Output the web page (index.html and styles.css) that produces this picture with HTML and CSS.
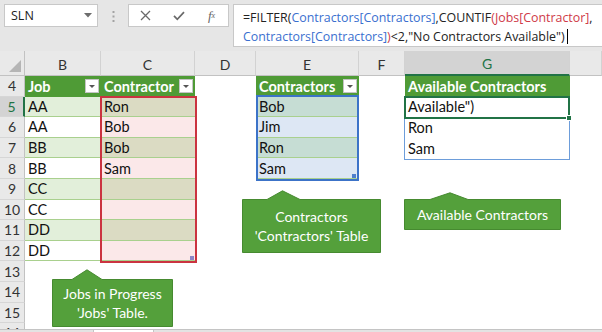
FILE: index.html
```html
<!DOCTYPE html>
<html>
<head>
<meta charset="utf-8">
<link rel="stylesheet" href="styles.css">
</head>
<body>
<div class="app">
  <div class="toolbar">
    <div class="namebox">
      <span>SLN</span>
      <svg width="8" height="5" viewBox="0 0 8 5"><path d="M0 0H8L4 4.5Z" fill="#6d6d6d"/></svg>
    </div>
    <div class="grip">
      <svg width="3" height="12" viewBox="0 0 3 12"><rect x="0.5" y="0" width="2" height="2" fill="#a3a3a3"/><rect x="0.5" y="4.5" width="2" height="2" fill="#a3a3a3"/><rect x="0.5" y="9" width="2" height="2" fill="#a3a3a3"/></svg>
    </div>
    <div class="fnbox">
      <span class="fnbtn"><svg width="11" height="11" viewBox="0 0 11 11"><path d="M1 1L10 10M10 1L1 10" stroke="#6a6a6a" stroke-width="1.3" fill="none"/></svg></span>
      <span class="fnbtn"><svg width="12" height="10" viewBox="0 0 12 10"><path d="M1 4.8L4.3 8.3L11 1.2" stroke="#6a6a6a" stroke-width="1.7" fill="none"/></svg></span>
      <span class="fnbtn fx">f<sub>x</sub></span>
    </div>
    <div class="formula">
      <div class="fline">=FILTER(<span class="fb">Contractors[Contractors]</span>,COUNTIF<span class="fr">(Jobs[Contractor]</span>,</div>
      <div class="fline"><span class="fb">Contractors[Contractors]</span><span class="fr">)</span>&lt;2,"No Contractors Available")<span class="caret"></span></div>
    </div>
  </div>

  <div class="sheet">
    <div class="grid">
      <div class="corner"><svg width="12" height="12" viewBox="0 0 12 12"><path d="M12 0V12H0Z" fill="#b5b5b5"/></svg></div>
      <div class="ch">B</div><div class="ch">C</div><div class="ch">D</div><div class="ch">E</div><div class="ch">F</div><div class="ch sel">G</div><div class="ch"></div>

      <div class="rh">4</div>
      <div class="cell th">Job<span class="fbtn"></span></div>
      <div class="cell th">Contractor<span class="fbtn"></span></div>
      <div></div>
      <div class="cell th">Contractors<span class="fbtn"></span></div>
      <div></div>
      <div class="cell th">Available Contractors</div>
      <div></div>

      <div class="rh sel">5</div>
      <div class="cell tb band">AA</div>
      <div class="cell tb r-odd">Ron</div>
      <div></div>
      <div class="cell tb b-odd">Bob</div>
      <div></div>
      <div class="cell">Available")</div>
      <div></div>

      <div class="rh">6</div>
      <div class="cell tb">AA</div>
      <div class="cell tb r-even">Bob</div>
      <div></div>
      <div class="cell tb b-even">Jim</div>
      <div></div>
      <div class="cell">Ron</div>
      <div></div>

      <div class="rh">7</div>
      <div class="cell tb band">BB</div>
      <div class="cell tb r-odd">Bob</div>
      <div></div>
      <div class="cell tb b-odd">Ron</div>
      <div></div>
      <div class="cell">Sam</div>
      <div></div>

      <div class="rh">8</div>
      <div class="cell tb">BB</div>
      <div class="cell tb r-even">Sam</div>
      <div></div>
      <div class="cell tb b-even">Sam</div>
      <div></div>
      <div class="cell"></div>
      <div></div>

      <div class="rh">9</div>
      <div class="cell tb band">CC</div>
      <div class="cell tb r-odd"></div>
      <div class="rest5"></div>

      <div class="rh">10</div>
      <div class="cell tb">CC</div>
      <div class="cell tb r-even"></div>
      <div class="rest5"></div>

      <div class="rh">11</div>
      <div class="cell tb band">DD</div>
      <div class="cell tb r-odd"></div>
      <div class="rest5"></div>

      <div class="rh">12</div>
      <div class="cell tb">DD</div>
      <div class="cell tb r-even"></div>
      <div class="rest5"></div>

      <div class="rh">13</div><div class="rest7"></div>
      <div class="rh">14</div><div class="rest7"></div>
      <div class="rh">15</div><div class="rest7"></div>
      <div class="rh">16</div><div class="rest7"></div>
    </div>

    <div class="ref ref-red"><span class="handle h-red"></span></div>
    <div class="ref ref-blue"><span class="handle h-blue"></span></div>
    <div class="ref ref-spill"></div>
    <div class="ref ref-active"><span class="fill-handle"></span></div>

    <div class="callout co-jobs">
      <svg class="co-shape" width="121" height="58" viewBox="0 0 121 58"><path d="M0.5 10.5H20L35 0.8L50 10.5H120.5V57.5H0.5Z" fill="#54a03b" stroke="#468a30"/></svg>
      <div class="co-text">Jobs in Progress<br>'Jobs' Table.</div>
    </div>
    <div class="callout co-con">
      <svg class="co-shape" width="139" height="63" viewBox="0 0 139 63"><path d="M0.5 9.5H25L40.5 0.8L58 9.5H138.5V62.5H0.5Z" fill="#54a03b" stroke="#468a30"/></svg>
      <div class="co-text">Contractors<br>'Contractors' Table</div>
    </div>
    <div class="callout co-av">
      <svg class="co-shape" width="157" height="38" viewBox="0 0 157 38"><path d="M0.5 7.5H26L46 0.8L64 7.5H156.5V37.5H0.5Z" fill="#54a03b" stroke="#468a30"/></svg>
      <div class="co-text">Available Contractors</div>
    </div>
  </div>

  <div class="tabs">
    <div class="tab t1"></div><div class="tab t2"></div><div class="tab t3"></div>
  </div>
</div>
</body>
</html>
```

FILE: styles.css
```css
* { box-sizing: border-box; margin: 0; padding: 0; }

body {
  width: 602px;
  height: 332px;
  overflow: hidden;
  background: #ffffff;
  font-family: Lato, "Liberation Sans", sans-serif;
}

.app {
  display: flex;
  flex-direction: column;
  height: 332px;
}

/* ---------- toolbar ---------- */
.toolbar {
  flex: none;
  height: 51px;
  background: #e6e6e6;
  display: flex;
  align-items: flex-start;
  padding: 4px 0 0 4px;
}

.namebox {
  width: 94px;
  height: 23px;
  background: #fff;
  border: 1px solid #c8c8c8;
  display: flex;
  align-items: center;
  justify-content: space-between;
  padding: 0 5px 0 6px;
  font: 12.5px "Open Sans", sans-serif;
  color: #222;
}

.grip {
  width: 30px;
  height: 23px;
  display: flex;
  align-items: center;
  justify-content: center;
  padding-top: 2px;
}

.fnbox {
  width: 101px;
  height: 23px;
  background: #fff;
  border: 1px solid #c8c8c8;
  display: flex;
  align-items: center;
  margin-right: 4px;
}

.fnbtn {
  flex: 1;
  display: flex;
  justify-content: center;
  align-items: center;
}

.fx {
  font: italic 13px "Liberation Serif", serif;
  color: #666;
}
.fx sub { font-size: 8px; vertical-align: -1px; }

.formula {
  flex: 1;
  height: 43px;
  background: #fff;
  border: 1px solid #c8c8c8;
  border-right: none;
  padding: 3px 0 0 9px;
  font: 12.4px "Open Sans", sans-serif;
  line-height: 19px;
  color: #222;
  white-space: nowrap;
  overflow: hidden;
}

.fline { display: flex; align-items: center; }
.fb { color: #3a6fcf; }
.fr { color: #cf3a48; }
.caret {
  display: inline-block;
  width: 1px;
  height: 15px;
  background: #000;
  margin-left: 2px;
}

/* ---------- sheet ---------- */
.sheet {
  flex: 1;
  position: relative;
  overflow: hidden;
}

.grid {
  display: grid;
  grid-template-columns: 25px 76px 94px 61px 103px 46px 165px 32px;
  grid-template-rows: 25px repeat(13, 20.6px);
}

.corner {
  background: #e9e9e9;
  border-right: 1px solid #c2c2c2;
  border-bottom: 1px solid #c2c2c2;
  display: flex;
  align-items: flex-end;
  justify-content: flex-end;
  padding: 0 3px 3px 0;
}

.ch {
  background: #e9e9e9;
  border-right: 1px solid #d2d2d2;
  border-bottom: 1px solid #c2c2c2;
  display: flex;
  align-items: center;
  justify-content: center;
  padding-top: 2px;
  font-size: 14px;
  color: #333;
}
.ch.sel {
  background: #d3d3d3;
  color: #217346;
  border-bottom: 2px solid #217346;
}

.rh {
  background: #e9e9e9;
  border-right: 1px solid #c2c2c2;
  border-bottom: 1px solid #d6d6d6;
  display: flex;
  align-items: center;
  justify-content: center;
  font-size: 14px;
  color: #333;
}
.rh.sel {
  background: #d3d3d3;
  color: #217346;
  border-right: 2px solid #217346;
}

.cell {
  display: flex;
  align-items: center;
  padding-left: 3px;
  font-size: 14.5px;
  color: #111;
  white-space: nowrap;
  overflow: hidden;
}

.th {
  background: #4f9b36;
  color: #fff;
  font-weight: 700;
  justify-content: space-between;
  padding-right: 2px;
}

.fbtn {
  width: 14px;
  height: 14px;
  background: #fff;
  border: 1px solid #c4c4c4;
  position: relative;
  flex: none;
}
.fbtn::after {
  content: "";
  position: absolute;
  left: 3px;
  top: 5px;
  border-left: 3.5px solid transparent;
  border-right: 3.5px solid transparent;
  border-top: 3.5px solid #555;
}

.tb { border-bottom: 1px solid #a9d08e; }
.band { background: #e2efda; }
.r-odd { background: #dbdbc3; }
.r-even { background: #fbe8e9; }
.b-odd { background: #c6ddd4; }
.b-even { background: #dde7f4; }

.rest5 { grid-column: span 5; }
.rest7 { grid-column: span 7; }

/* ---------- reference overlays ---------- */
.ref { position: absolute; pointer-events: none; }

.ref-red {
  left: 100px;
  top: 45px;
  width: 97px;
  height: 167px;
  border: 2px solid #cb3340;
}
.ref-blue {
  left: 256px;
  top: 44px;
  width: 103px;
  height: 86px;
  border: 2px solid #3c73c8;
}
.ref-spill {
  left: 404px;
  top: 45px;
  width: 166px;
  height: 64px;
  border: 1px solid #6d9dda;
}
.ref-active {
  left: 404px;
  top: 45px;
  width: 166px;
  height: 23px;
  border: 2px solid #217346;
}

.handle {
  position: absolute;
  right: 1px;
  bottom: 1px;
  width: 4px;
  height: 4px;
}
.h-red { background: #8c85c6; }
.h-blue { background: #4f7fcc; }

.fill-handle {
  position: absolute;
  right: -4px;
  bottom: -4px;
  width: 6px;
  height: 6px;
  background: #217346;
  border: 1px solid #fff;
}

/* ---------- callouts ---------- */
.callout {
  position: absolute;
  color: #fff;
  font-size: 14px;
  line-height: 19px;
  text-align: center;
}
.co-shape { position: absolute; left: 0; top: 0; }
.co-text {
  position: relative;
  display: flex;
  align-items: center;
  justify-content: center;
  height: 100%;
}

.co-jobs { left: 52px; top: 218px; width: 121px; height: 58px; padding-top: 10px; }
.co-con { left: 242px; top: 139px; width: 139px; height: 63px; padding-top: 9px; }
.co-av { left: 404px; top: 141px; width: 157px; height: 38px; padding-top: 7px; }

/* ---------- bottom tabs strip ---------- */
.tabs {
  flex: none;
  height: 3px;
  background: #e3e3e3;
  border-top: 1px solid #c4c4c4;
  display: flex;
}
.tab { height: 100%; }
.t1 { width: 94px; border-right: 1px solid #c4c4c4; }
.t2 { width: 60px; background: #fff; border-right: 1px solid #c4c4c4; }
.t3 { flex: 1; }
```
